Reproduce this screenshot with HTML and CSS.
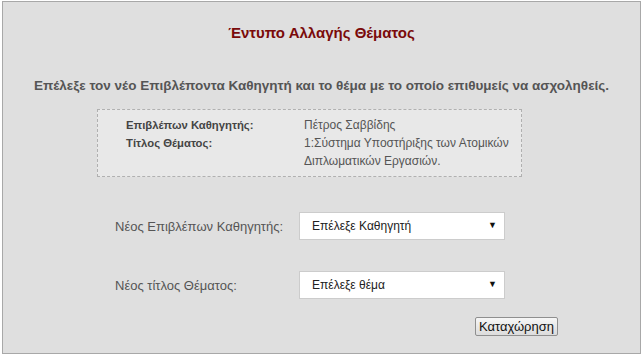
FILE: index.html
```html
<!DOCTYPE html>
<html lang="el">
<head>
<meta charset="utf-8">
<title>Έντυπο Αλλαγής Θέματος</title>
<link rel="stylesheet" href="styles.css">
</head>
<body>
<div class="page">
  <h1 class="title">Έντυπο Αλλαγής Θέματος</h1>
  <p class="intro">Επέλεξε τον νέο Επιβλέποντα Καθηγητή και το θέμα με το οποίο επιθυμείς να ασχοληθείς.</p>
  <div class="current">
    <div class="current-label">Επιβλέπων Καθηγητής:</div>
    <div class="current-value">Πέτρος Σαββίδης</div>
    <div class="current-label">Τίτλος Θέματος:</div>
    <div class="current-value">1:Σύστημα Υποστήριξης των Ατομικών<br>Διπλωματικών Εργασιών.</div>
  </div>
  <form class="form">
    <div class="form-row">
      <label class="form-label" for="prof">Νέος Επιβλέπων Καθηγητής:</label>
      <div class="select-wrap">
        <select id="prof" class="select"><option>Επέλεξε Καθηγητή</option></select>
        <span class="arrow">&#9660;</span>
      </div>
    </div>
    <div class="form-row second">
      <label class="form-label" for="topic">Νέος τίτλος Θέματος:</label>
      <div class="select-wrap">
        <select id="topic" class="select"><option>Επέλεξε θέμα</option></select>
        <span class="arrow">&#9660;</span>
      </div>
    </div>
    <div class="actions">
      <button type="button" class="submit">Καταχώρηση</button>
    </div>
  </form>
</div>
</body>
</html>
```
FILE: styles.css
```css
html, body {
  margin: 0;
  padding: 0;
  background: #ffffff;
}
body {
  font-family: "Liberation Sans", Arial, sans-serif;
}
.page {
  margin: 1px 0 0 2px;
  width: 637px;
  height: 351px;
  border: 1px solid #a8a8a8;
  background: #dfdfdf;
  box-sizing: content-box;
  display: flex;
  flex-direction: column;
}
.title {
  margin: 23px 0 0 0;
  font-size: 15px;
  line-height: 16px;
  font-weight: bold;
  color: #7a0a0a;
  text-align: center;
}
.intro {
  margin: 37px 0 0 0;
  font-size: 13.5px;
  line-height: 16px;
  font-weight: bold;
  color: #555555;
  text-align: center;
}
.current {
  margin: 15px 0 0 94px;
  width: 423px;
  border: 1px dashed #b0b0b0;
  background: #e8e8e8;
  box-sizing: content-box;
  display: grid;
  grid-template-columns: 206px 1fr;
  align-content: start;
  padding-top: 6px;
  height: 60px;
}
.current-label {
  padding-left: 28px;
  font-size: 11.3px;
  font-weight: bold;
  line-height: 18px;
  color: #444444;
}
.current-value {
  font-size: 12px;
  line-height: 18px;
  color: #555555;
}
.form {
  margin: 35px 0 0 0;
  display: flex;
  flex-direction: column;
}
.form-row {
  display: grid;
  grid-template-columns: 184px 206px;
  align-items: center;
  padding-left: 112px;
}
.form-row.second {
  margin-top: 31px;
}
.form-label {
  font-size: 13px;
  color: #555555;
}
.select-wrap {
  position: relative;
  height: 28px;
}
.select {
  -webkit-appearance: none;
  appearance: none;
  width: 206px;
  height: 28px;
  margin: 0;
  border: 1px solid #cccccc;
  border-radius: 0;
  background: #ffffff;
  padding: 0 0 0 12px;
  font-family: "Liberation Sans", Arial, sans-serif;
  font-size: 12px;
  color: #222222;
  outline: none;
}
.arrow {
  position: absolute;
  right: 8px;
  top: 8px;
  font-size: 9px;
  line-height: 10px;
  color: #111111;
  pointer-events: none;
}
.actions {
  margin-top: 18px;
  padding-left: 472px;
}
.submit {
  height: 19px;
  width: 83px;
  padding: 0;
  margin: 0;
  border: 1px solid #8f8f8f;
  border-radius: 2px;
  background: linear-gradient(#f6f6f6, #dcdcdc);
  font-family: "Liberation Sans", Arial, sans-serif;
  font-size: 13px;
  line-height: 15px;
  color: #111111;
}
```
